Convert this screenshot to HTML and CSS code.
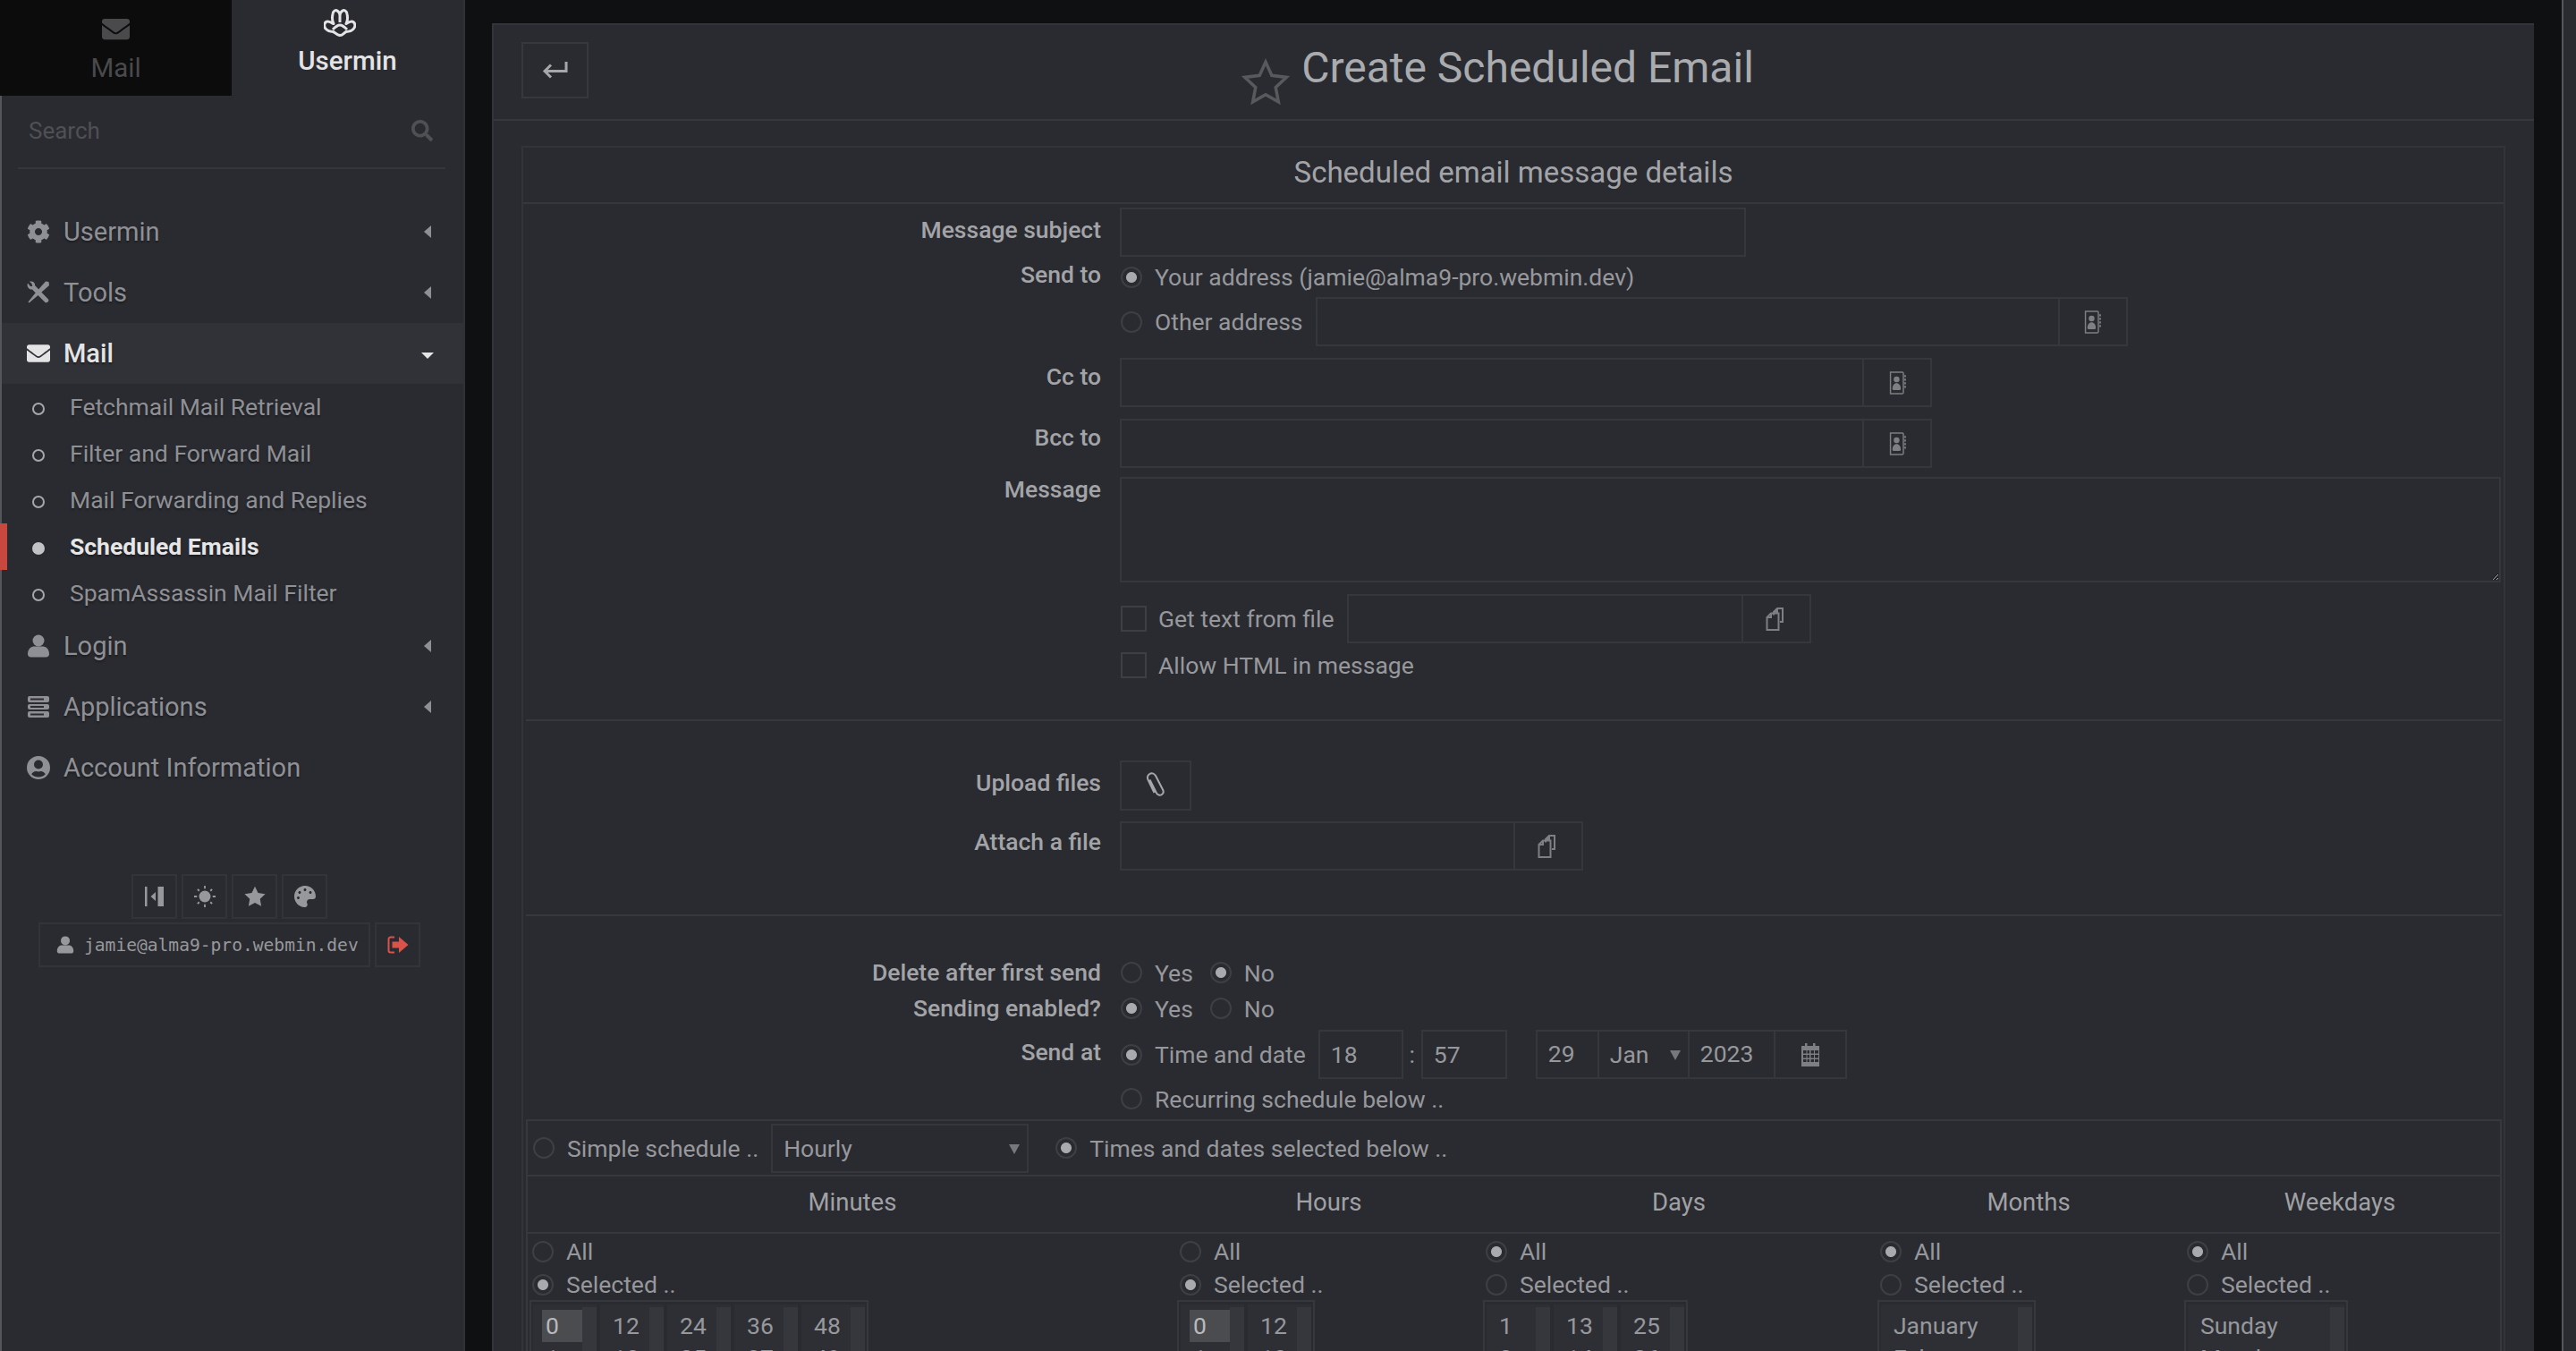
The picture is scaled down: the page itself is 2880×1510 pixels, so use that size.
FILE: index.html
```html
<!DOCTYPE html>
<html lang="en">
<head>
<meta charset="utf-8">
<title>Create Scheduled Email</title>
<link rel="stylesheet" href="styles.css">
</head>
<body>
<svg class="defs" xmlns="http://www.w3.org/2000/svg">
  <symbol id="i-envelope" viewBox="0 0 512 512"><path d="M502.3 190.8c3.9-3.1 9.7-.2 9.7 4.7V400c0 26.5-21.5 48-48 48H48c-26.5 0-48-21.5-48-48V195.6c0-5 5.7-7.8 9.7-4.7 22.4 17.4 52.1 39.5 154.1 113.6 21.1 15.4 56.7 47.8 92.2 47.6 35.7.3 72-32.8 92.3-47.6 102-74.1 131.6-96.3 154-113.7zM256 320c23.2.4 56.6-29.2 73.4-41.4 132.7-96.3 142.8-104.7 173.4-128.7 5.8-4.5 9.2-11.5 9.2-18.9v-19c0-26.5-21.5-48-48-48H48C21.5 64 0 85.5 0 112v19c0 7.4 3.4 14.3 9.2 18.9 30.6 23.9 40.7 32.4 173.4 128.7 16.8 12.2 50.2 41.8 73.4 41.4z"/></symbol>
  <symbol id="i-search" viewBox="0 0 512 512"><path d="M505 442.7L405.3 343c-4.5-4.5-10.6-7-17-7H372c27.6-35.3 44-79.7 44-128C416 93.1 322.9 0 208 0S0 93.1 0 208s93.1 208 208 208c48.3 0 92.7-16.4 128-44v16.3c0 6.4 2.5 12.5 7 17l99.7 99.7c9.4 9.4 24.6 9.4 33.9 0l28.3-28.3c9.4-9.4 9.4-24.6.1-34zM208 336c-70.7 0-128-57.2-128-128 0-70.7 57.2-128 128-128 70.7 0 128 57.2 128 128 0 70.7-57.2 128-128 128z"/></symbol>
  <symbol id="i-cog" viewBox="0 0 512 512"><path d="M487.4 315.7l-42.6-24.6c4.3-23.2 4.3-47 0-70.2l42.6-24.6c4.9-2.8 7.1-8.6 5.5-14-11.1-35.6-30-67.8-54.7-94.6-3.8-4.1-10-5.1-14.8-2.3L380.8 110c-17.9-15.4-38.5-27.3-60.8-35.1V25.8c0-5.6-3.9-10.5-9.4-11.7-36.7-8.2-74.3-7.8-109.2 0-5.5 1.2-9.4 6.1-9.4 11.7V75c-22.2 7.9-42.8 19.8-60.8 35.1L88.7 85.5c-4.9-2.8-11-1.9-14.8 2.3-24.7 26.7-43.6 58.9-54.7 94.6-1.7 5.4.6 11.2 5.5 14L67.3 221c-4.3 23.2-4.3 47 0 70.2l-42.6 24.6c-4.9 2.8-7.1 8.6-5.5 14 11.1 35.6 30 67.8 54.7 94.6 3.8 4.1 10 5.1 14.8 2.3l42.6-24.6c17.9 15.4 38.5 27.3 60.8 35.1v49.2c0 5.6 3.9 10.5 9.4 11.7 36.7 8.2 74.3 7.8 109.2 0 5.5-1.2 9.4-6.1 9.4-11.7v-49.2c22.2-7.9 42.8-19.8 60.8-35.1l42.6 24.6c4.9 2.8 11 1.9 14.8-2.3 24.7-26.7 43.6-58.9 54.7-94.6 1.5-5.5-.7-11.3-5.6-14.1zM256 336c-44.1 0-80-35.9-80-80s35.9-80 80-80 80 35.9 80 80-35.9 80-80 80z"/></symbol>
  <symbol id="i-tools" viewBox="0 0 26 26"><path d="M24.5 1 21 0.5 9.5 13.5 1.5 23.5 2.5 24.5 12 16.5 25 5Z"/><path d="M2 1.500 6 5.500 5.500 3 3 .8C6-.5 9.500 1.500 9 5L24 20.500C25.500 22 22.500 25.500 20.500 24L6 9.500C2.500 10 -.5 6 1 2.500L4 6 6.500 6" fill="currentColor" fill-rule="evenodd"/></symbol>
  <symbol id="i-user" viewBox="0 0 26 26"><circle cx="13" cy="7" r="6.500"/><path d="M1 22c0-6 4-8.500 7.500-8.500h9c3.500 0 7.500 2.500 7.500 8.500 0 2-1.500 3.500-3.500 3.500h-17C2.500 25.500 1 24 1 22Z"/></symbol>
  <symbol id="i-server" viewBox="0 0 26 26"><path fill-rule="evenodd" d="M3 1h20a2 2 0 0 1 2 2v3a2 2 0 0 1-2 2H3a2 2 0 0 1-2-2V3a2 2 0 0 1 2-2Zm0 9h20a2 2 0 0 1 2 2v2a2 2 0 0 1-2 2H3a2 2 0 0 1-2-2v-2a2 2 0 0 1 2-2Zm0 8h20a2 2 0 0 1 2 2v3a2 2 0 0 1-2 2H3a2 2 0 0 1-2-2v-3a2 2 0 0 1 2-2ZM4 3.500v2h15v-2Zm0 8.500v2h15v-2Zm0 8.500v2h15v-2Z"/></symbol>
  <symbol id="i-usercircle" viewBox="0 0 26 26"><path fill-rule="evenodd" d="M13 0a13 13 0 1 1 0 26a13 13 0 0 1 0-26Zm0 4.500a5 5 0 1 0 0 10a5 5 0 0 0 0-10Zm0 19c3 0 5.800-1.200 7.800-3.300c-1-1.900-3-3.200-5.300-3.200c-.8 0-1.600.5-2.500.5s-1.700-.5-2.500-.5c-2.300 0-4.300 1.300-5.300 3.200c2 2.100 4.800 3.300 7.800 3.300Z"/></symbol>
  <symbol id="i-star" viewBox="0 0 26 26"><path d="M13 .8l3.800 8 8.700 1.200-6.300 6 1.500 8.700-7.700-4.200-7.700 4.200 1.500-8.700-6.300-6 8.700-1.200Z"/></symbol>
  <symbol id="i-palette" viewBox="0 0 512 512"><path d="M204.300 5C104.900 24.400 24.800 104.300 5.200 203.400c-37 187 131.700 326.400 258.800 306.700 41.200-6.400 61.400-54.600 42.500-91.700-23.100-45.400 9.900-98.400 60.900-98.400h79.700c35.800 0 64.800-29.600 64.900-65.300C511.500 97.100 368.100-26.900 204.300 5zM96 320c-17.700 0-32-14.300-32-32s14.300-32 32-32 32 14.300 32 32-14.300 32-32 32zm32-128c-17.700 0-32-14.300-32-32s14.300-32 32-32 32 14.300 32 32-14.300 32-32 32zm128-64c-17.700 0-32-14.300-32-32s14.300-32 32-32 32 14.300 32 32-14.300 32-32 32zm128 64c-17.700 0-32-14.300-32-32s14.300-32 32-32 32 14.300 32 32-14.300 32-32 32z"/></symbol>
  <symbol id="i-book" viewBox="0 0 26 36"><path fill="none" stroke="currentColor" stroke-width="2" d="M2 1.500h18.500a1.500 1.500 0 0 1 1.500 1.500v30a1.500 1.500 0 0 1-1.500 1.500H2Z"/><circle cx="11.500" cy="12.500" r="4.500"/><path d="M5 27c0-5 3-8.500 6.500-8.500S18 22 18 27c0 1.500-1 2-2 2H7c-1 0-2-.5-2-2Z"/><path d="M23.500 6h2.500v3h-2.500Zm0 5.500h2.500v3h-2.500Zm0 5.500h2.500v3h-2.500Zm0 5.500h2.500v3h-2.500Z"/></symbol>
  <symbol id="i-copy" viewBox="0 0 24 26"><path fill="none" stroke="currentColor" stroke-width="2" d="M9 8.500V5L13 1h6v15h-3M1.500 11 6 6.500h8.500V25H1.500ZM13 1v4H9M6 6.500v4.500H1.500"/></symbol>
  <symbol id="i-clip" viewBox="0 0 24 30"><path fill="none" stroke="currentColor" stroke-width="2" d="M5.500 8.500 13 23.500c1 2 4 3 6 1.500 1.800-1.200 2-3.500 1-5.500L12 4C10.800 1.800 8 .5 5.500 1.800 3 3 2.300 6 3.500 8.500L10.500 23"/></symbol>
  <symbol id="i-cal" viewBox="0 0 22 26"><path fill-rule="evenodd" d="M5 0h2.500v3H14V0h2.500v3H21v23H1V3h4Zm-2 8v3.500h3.500V8Zm4.500 0v3.500H10V8Zm4 0v3.500h3.500V8Zm4.500 0v3.500H20V8ZM3 13v3.500h3.500V13Zm4.500 0v3.500H10V13Zm4 0v3.500h3.500V13Zm4.500 0v3.500H20V13ZM3 18v3h3.500v-3Zm4.500 0v3H10v-3Zm4 0v3h3.500v-3Zm4.500 0v3H20v-3Z"/></symbol>
</svg>

<aside class="sidebar">
  <div class="tabs">
    <div class="tab tab-off">
      <svg class="tab-icon"><use href="#i-envelope"/></svg>
      <span>Mail</span>
    </div>
    <div class="tab tab-on">
      <svg class="tab-logo" viewBox="0 0 36 34"><path d="M11 17.500C9 14 9.500 9 10 6.500 10.500 3 13.500 2 15 3c1.500 1 3 3 3 5 0-2 1.500-4 3-5 1.500-1 4.500 0 5 3.500.5 2.500 1 7.500-1 11 3-2 6-3.500 8-2 2.500 2 2.500 5.500 0 8-2 2.200-5 2.800-8 3-2.500 1-4 4.500-7.500 4s-4.500-3-7-4c-3-.2-6-.8-8-3-2.500-2.500-2.500-6 0-8 2-1.500 5-.0 8 2Zm7-9.500v8m-8 8c3-3 6-5 8-5s5 2 8 5"/></svg>
      <span>Usermin</span>
    </div>
  </div>
  <div class="search">
    <span>Search</span>
    <svg class="search-icon"><use href="#i-search"/></svg>
  </div>
  <nav class="nav">
    <div class="nav-item"><svg class="nav-icon"><use href="#i-cog"/></svg><span class="nav-label">Usermin</span><i class="arrow-left"></i></div>
    <div class="nav-item"><svg class="nav-icon"><use href="#i-tools"/></svg><span class="nav-label">Tools</span><i class="arrow-left"></i></div>
    <div class="nav-item nav-open"><svg class="nav-icon"><use href="#i-envelope"/></svg><span class="nav-label">Mail</span><i class="arrow-down"></i></div>
    <ul class="subnav">
      <li>Fetchmail Mail Retrieval</li>
      <li>Filter and Forward Mail</li>
      <li>Mail Forwarding and Replies</li>
      <li class="sub-active">Scheduled Emails</li>
      <li>SpamAssassin Mail Filter</li>
    </ul>
    <div class="nav-item"><svg class="nav-icon"><use href="#i-user"/></svg><span class="nav-label">Login</span><i class="arrow-left"></i></div>
    <div class="nav-item"><svg class="nav-icon"><use href="#i-server"/></svg><span class="nav-label">Applications</span><i class="arrow-left"></i></div>
    <div class="nav-item"><svg class="nav-icon"><use href="#i-usercircle"/></svg><span class="nav-label">Account Information</span></div>
  </nav>
  <div class="tools-row">
    <div class="tool-btn"><svg class="tool-icon" viewBox="0 0 24 24"><path d="M1 1h2.500v22H1ZM15.500 1H22v22h-6.500ZM13 7v10l-5.500-5Z"/></svg></div>
    <div class="tool-btn"><svg class="tool-icon" viewBox="0 0 26 26"><circle cx="13" cy="13" r="7"/><path d="M12 0h2v3.500h-2Zm0 22.500h2V26h-2ZM0 12h3.500v2H0Zm22.500 0H26v2h-3.500ZM3.500 5l1.500-1.500L7 5.500 5.500 7Zm15.500 15.500 1.500-1.500 2 2-1.500 1.500ZM3.500 21l2-2L7 20.500l-2 2Zm15.500-15.500 2-2L22.500 5l-2 2Z"/></svg></div>
    <div class="tool-btn"><svg class="tool-icon"><use href="#i-star"/></svg></div>
    <div class="tool-btn"><svg class="tool-icon"><use href="#i-palette"/></svg></div>
  </div>
  <div class="user-row">
    <div class="user-chip"><svg class="user-icon"><use href="#i-user"/></svg><span>jamie@alma9-pro.webmin.dev</span></div>
    <div class="logout"><svg class="logout-icon" viewBox="0 0 24 20"><path fill="none" stroke="currentColor" stroke-width="2" d="M8 1.500H3.500A2 2 0 0 0 1.500 3.500v13a2 2 0 0 0 2 2H8"/><path d="M5.500 6.500h7.500V1L23.500 10 13 19v-5.500H5.500Z"/></svg></div>
  </div>
</aside>

<main class="panel">
  <header class="page-head">
    <div class="head-left">
      <button class="back" type="button"><svg class="back-icon" viewBox="0 0 30 24"><path d="M27 2v10.500H3M10 5.500 3 12.500l7 7"/></svg></button>
      <svg class="head-star" viewBox="0 0 26 26"><path d="M13 2.500l3.300 7.300 7.900 1-5.800 5.400 1.500 7.800-6.900-3.900-6.900 3.900 1.500-7.800L1.800 10.800l7.900-1Z"/></svg>
    </div>
    <h1>Create Scheduled Email</h1>
    <div></div>
  </header>

  <section class="box">
    <h2 class="box-title">Scheduled email message details</h2>
    <div class="row row-subject">
      <label class="lbl">Message subject</label>
      <div class="fld"><input class="in w-subject" type="text"></div>
    </div>
    <div class="row">
      <label class="lbl lbl-send">Send to</label>
      <div class="fld">
        <div class="line line-45"><input class="radio" type="radio" name="to" checked><span>Your address (jamie@alma9-pro.webmin.dev)</span></div>
        <div class="line line-55"><input class="radio" type="radio" name="to"><span>Other address</span>
          <div class="group g-other"><input class="in" type="text"><span class="addon"><svg class="ic-book"><use href="#i-book"/></svg></span></div>
        </div>
      </div>
    </div>
    <div class="row row-cc">
      <label class="lbl lbl-cc">Cc to</label>
      <div class="fld"><div class="group g-cc"><input class="in" type="text"><span class="addon"><svg class="ic-book"><use href="#i-book"/></svg></span></div></div>
    </div>
    <div class="row row-cc">
      <label class="lbl lbl-cc">Bcc to</label>
      <div class="fld"><div class="group g-cc"><input class="in" type="text"><span class="addon"><svg class="ic-book"><use href="#i-book"/></svg></span></div></div>
    </div>
    <div class="row row-msg">
      <label class="lbl lbl-msg">Message</label>
      <div class="fld">
        <textarea class="msg"></textarea>
        <div class="line line-55 line-file"><input class="check" type="checkbox"><span>Get text from file</span>
          <div class="group g-file"><input class="in" type="text"><span class="addon"><svg class="ic-copy"><use href="#i-copy"/></svg></span></div>
        </div>
        <div class="line line-48"><input class="check" type="checkbox"><span>Allow HTML in message</span></div>
      </div>
    </div>
    <hr class="sep sep-1">
    <div class="row row-upload">
      <label class="lbl">Upload files</label>
      <div class="fld"><button class="clip-btn" type="button"><svg class="ic-clip"><use href="#i-clip"/></svg></button></div>
    </div>
    <div class="row row-attach">
      <label class="lbl lbl-attach">Attach a file</label>
      <div class="fld"><div class="group g-attach"><input class="in" type="text"><span class="addon"><svg class="ic-copy"><use href="#i-copy"/></svg></span></div></div>
    </div>
    <hr class="sep sep-2">
    <div class="row row-yn">
      <label class="lbl lbl-center">Delete after first send</label>
      <div class="fld line"><input class="radio" type="radio" name="del"><span class="yes">Yes</span><input class="radio" type="radio" name="del" checked><span>No</span></div>
    </div>
    <div class="row row-yn">
      <label class="lbl lbl-center">Sending enabled?</label>
      <div class="fld line"><input class="radio" type="radio" name="en" checked><span class="yes">Yes</span><input class="radio" type="radio" name="en"><span>No</span></div>
    </div>
    <div class="row row-at">
      <label class="lbl">Send at</label>
      <div class="fld">
        <div class="line line-55"><input class="radio" type="radio" name="at" checked><span>Time and date</span>
          <input class="in in-time" type="text" value="18"><span class="colon">:</span><input class="in in-time2" type="text" value="57">
          <div class="date">
            <span class="d-cell d-day">29</span>
            <span class="d-cell d-mon">Jan<i class="caret"></i></span>
            <span class="d-cell d-year">2023</span>
            <span class="d-cell d-cal"><svg class="ic-cal"><use href="#i-cal"/></svg></span>
          </div>
        </div>
        <div class="line line-44"><input class="radio" type="radio" name="at"><span>Recurring schedule below ..</span></div>
      </div>
    </div>

    <div class="sched">
      <div class="sched-top line">
        <input class="radio" type="radio" name="mode"><span>Simple schedule ..</span>
        <span class="select">Hourly<i class="caret"></i></span>
        <input class="radio radio-times" type="radio" name="mode" checked><span>Times and dates selected below ..</span>
      </div>
      <div class="sched-head">
        <span>Minutes</span><span>Hours</span><span>Days</span><span>Months</span><span>Weekdays</span>
      </div>
      <div class="sched-body">
        <div class="col">
          <div class="line line-37"><input class="radio" type="radio" name="c1"><span>All</span></div>
          <div class="line line-37"><input class="radio" type="radio" name="c1" checked><span>Selected ..</span></div>
          <div class="multi">
            <div class="list l-num"><div class="opts"><b class="opt opt-on">0</b><b class="opt">1</b></div><i class="sb"></i></div>
            <div class="list l-num"><div class="opts"><b class="opt">12</b><b class="opt">13</b></div><i class="sb"></i></div>
            <div class="list l-num"><div class="opts"><b class="opt">24</b><b class="opt">25</b></div><i class="sb"></i></div>
            <div class="list l-num"><div class="opts"><b class="opt">36</b><b class="opt">37</b></div><i class="sb"></i></div>
            <div class="list l-num"><div class="opts"><b class="opt">48</b><b class="opt">49</b></div><i class="sb"></i></div>
          </div>
        </div>
        <div class="col">
          <div class="line line-37"><input class="radio" type="radio" name="c2"><span>All</span></div>
          <div class="line line-37"><input class="radio" type="radio" name="c2" checked><span>Selected ..</span></div>
          <div class="multi">
            <div class="list l-num"><div class="opts"><b class="opt opt-on">0</b><b class="opt">1</b></div><i class="sb"></i></div>
            <div class="list l-num"><div class="opts"><b class="opt">12</b><b class="opt">13</b></div><i class="sb"></i></div>
          </div>
        </div>
        <div class="col">
          <div class="line line-37"><input class="radio" type="radio" name="c3" checked><span>All</span></div>
          <div class="line line-37"><input class="radio" type="radio" name="c3"><span>Selected ..</span></div>
          <div class="multi">
            <div class="list l-num"><div class="opts"><b class="opt">1</b><b class="opt">2</b></div><i class="sb"></i></div>
            <div class="list l-num"><div class="opts"><b class="opt">13</b><b class="opt">14</b></div><i class="sb"></i></div>
            <div class="list l-num"><div class="opts"><b class="opt">25</b><b class="opt">26</b></div><i class="sb"></i></div>
          </div>
        </div>
        <div class="col">
          <div class="line line-37"><input class="radio" type="radio" name="c4" checked><span>All</span></div>
          <div class="line line-37"><input class="radio" type="radio" name="c4"><span>Selected ..</span></div>
          <div class="multi">
            <div class="list l-mon"><div class="opts"><b class="opt">January</b><b class="opt">February</b></div><i class="sb"></i></div>
          </div>
        </div>
        <div class="col">
          <div class="line line-37"><input class="radio" type="radio" name="c5" checked><span>All</span></div>
          <div class="line line-37"><input class="radio" type="radio" name="c5"><span>Selected ..</span></div>
          <div class="multi">
            <div class="list l-day"><div class="opts"><b class="opt">Sunday</b><b class="opt">Monday</b></div><i class="sb"></i></div>
          </div>
        </div>
      </div>
    </div>
  </section>
</main>
<div class="edge"></div>
</body>
</html>
```

FILE: styles.css
```css
* { box-sizing: border-box; }
html, body { margin: 0; height: 1510px; overflow: hidden; }
body {
  display: flex;
  background: #0f1011;
  font-family: Roboto, "Liberation Sans", sans-serif;
  font-size: 26.500px;
  color: #97989c;
}
.defs { position: absolute; width: 0; height: 0; }
svg { fill: currentColor; display: block; }

/* sidebar */
.sidebar {
  width: 520px;
  flex: none;
  height: 1510px;
  background: #2a2b30;
  border-left: 2px solid #55565a;
  border-right: 2px solid #303136;
  display: flex;
  flex-direction: column;
}
.tabs { display: flex; height: 107px; margin-left: -2px; }
.tab { flex: 1; display: flex; flex-direction: column; align-items: center; font-size: 29.500px; line-height: 36px; }
.tab-off { flex: none; width: 259px; background: #0c0c0d; color: #4a4a4c; padding-top: 17px; }
.tab-on { color: #e4e4e5; font-weight: 500; padding-top: 9px; }
.tab-icon { width: 31px; height: 31px; margin-bottom: 10px; }
.tab-logo { width: 36px; height: 34px; margin-bottom: 7px; fill: none; stroke: currentColor; stroke-width: 3; stroke-linejoin: round; margin-left: -18px; }
.search {
  height: 82px;
  margin: 0 20px 0 18px;
  padding: 0 12px;
  border-bottom: 2px solid #35363b;
  display: flex;
  justify-content: space-between;
  align-items: center;
  color: #4f5054;
  font-size: 26px;
  padding-top: 25px;
  padding-bottom: 27px;
}
.search-icon { width: 24px; height: 24px; margin-right: 2px; }
.nav { margin-top: 36px; color: #8f9095; }
.nav-item { height: 68px; display: flex; align-items: center; padding-left: 28px; padding-right: 36px; font-size: 29px; text-shadow: 0 2px 2px #1d1e21; }
.nav-open { background: #313238; color: #e4e4e5; font-weight: 500; margin-top: 0; }
.nav-icon { width: 26px; height: 26px; flex: none; }
.nav-label { flex: 1; margin-left: 15px; }
.arrow-left { width: 0; height: 0; border-style: solid; border-width: 7px 8px 7px 0; border-color: transparent currentColor transparent transparent; margin-right: 0; }
.arrow-down { width: 0; height: 0; border-style: solid; border-width: 7px 7px 0; border-color: currentColor transparent transparent; margin-right: -3px; margin-top: 4px; }
.subnav { list-style: none; margin: 0; padding: 0; height: 259px; font-size: 26.500px; }
.subnav li { position: relative; height: 52px; line-height: 52px; padding-left: 76px; text-shadow: 0 2px 2px #1d1e21; }
.subnav li::before { content: ""; position: absolute; left: 34px; top: 21px; width: 10px; height: 10px; border: 2px solid #a6a7aa; border-radius: 50%; background: #2a2b30; }
.subnav .sub-active { color: #e6e6e7; font-weight: 700; }
.subnav .sub-active::before { background: #c2c3c5; border-color: #c2c3c5; }
.subnav .sub-active::after { content: ""; position: absolute; left: -2px; top: 0; width: 8px; height: 52px; background: #c8483f; }
.tools-row { display: flex; gap: 5px; margin-top: 85px; margin-left: 145px; }
.tool-btn { width: 51px; height: 50px; border: 2px solid #333439; display: flex; align-items: center; justify-content: center; color: #97989c; }
.tool-icon { width: 24px; height: 24px; }
.user-row { display: flex; gap: 5px; margin-top: 4px; margin-left: 41px; }
.user-chip { width: 371px; height: 50px; border: 2px solid #333439; display: flex; align-items: center; padding-left: 18px; gap: 11px; font-family: "DejaVu Sans Mono", monospace; font-size: 19.600px; color: #97989c; }
.user-icon { width: 20px; height: 24px; }
.logout { width: 51px; height: 50px; border: 2px solid #333439; display: flex; align-items: center; justify-content: center; color: #d9534a; }
.logout-icon { width: 24px; height: 20px; }

/* main */
.panel {
  width: 2283px;
  flex: none;
  margin: 26px 0 0 30px;
  background: #2a2b30;
  border-top: 2px solid #333439;
  border-left: 2px solid #333439;
  padding: 0 0 0;
}
.page-head {
  height: 107px;
  display: grid;
  grid-template-columns: 1fr auto 1fr;
  border-bottom: 2px solid #37383d;
  padding: 0 0 0 31px;
}
.head-left { display: flex; justify-content: space-between; padding-top: 19px; }
.back { width: 75px; height: 63px; background: none; border: 2px solid #37383d; padding: 0; color: #a6a7aa; display: flex; align-items: center; justify-content: center; }
.back-icon { width: 30px; height: 24px; fill: none; stroke: currentColor; stroke-width: 3; }
.head-star { width: 54px; height: 54px; margin-top: 17px; margin-right: 13px; fill: none; stroke: #58595d; stroke-width: 1.700; }
h1 { margin: 0; font-size: 48px; line-height: 96px; font-weight: 400; color: #a9abae; }
.box { margin: 28px 32px 0 31px; border: 2px solid #333439; border-bottom: 0; }
.box-title { margin: 0; height: 63px; line-height: 55px; text-align: center; font-size: 33px; font-weight: 400; color: #a3a4a8; border-bottom: 2px solid #37383d; }
.row { display: grid; grid-template-columns: 646px 1fr; column-gap: 21px; }
.lbl { text-align: right; font-weight: 500; line-height: 28px; padding-top: 11px; color: #a3a4a7; }
.lbl-send { padding-top: 6px; }
.lbl-cc { padding-top: 7px; }
.lbl-msg { padding-top: 0; }
.lbl-attach { padding-top: 9px; }
.lbl-center { padding-top: 0; line-height: 40px; }
.row-subject { margin-top: 4px; height: 55px; }
.row-cc { margin-top: 13px; height: 55px; }
.row-msg { margin-top: 10px; }
.row-upload { margin-top: 44px; height: 56px; }
.row-attach { margin-top: 12px; height: 55px; }
.row-yn { height: 40px; }
.row-at { margin-top: 4px; }
.sep { height: 2px; border: 0; background: #37383d; margin: 0 2px 0 3px; }
.sep-1 { margin-top: 37px; }
.sep-2 { margin-top: 49px; margin-bottom: 43px; }
.in { height: 55px; background: transparent; border: 2px solid #36373c; font: inherit; color: inherit; padding: 0 12px; display: block; min-width: 0; }
.w-subject { width: 700px; }
.line { display: flex; align-items: center; white-space: nowrap; }
.line-45 { height: 45px; }
.line-55 { height: 55px; }
.line-48 { height: 48px; }
.line-44 { height: 44px; }
.line-37 { height: 37px; }
.radio, .check { appearance: none; margin: 0; flex: none; background: transparent; }
.radio { width: 24px; height: 24px; border: 2px solid #3e3f44; border-radius: 50%; margin-right: 14px; margin-left: 1px; }
.radio:checked { background: radial-gradient(circle, #a9aaad 0 5.500px, transparent 6.500px); }
.check { width: 29px; height: 29px; border: 2px solid #3e3f44; margin-right: 13px; margin-left: 1px; }
.group { display: flex; height: 55px; }
.group .in { flex: 1; border-right: 0; }
.addon { width: 78px; border: 2px solid #36373c; display: flex; align-items: center; justify-content: center; color: #7e7f83; }
.g-other { width: 908px; margin-left: 14px; }
.g-cc { width: 908px; }
.g-file { width: 519px; margin-left: 14px; }
.g-attach { width: 518px; }
.ic-book { width: 25px; height: 26px; }
.ic-copy { width: 24px; height: 26px; }
.msg { display: block; width: 1544px; height: 118px; background: transparent; border: 2px solid #36373c; resize: both; color-scheme: dark; }
.line-file { margin-top: 13px; }
.clip-btn { width: 80px; height: 56px; background: transparent; border: 2px solid #36373c; padding: 0; color: #a6a7aa; display: flex; align-items: center; justify-content: center; }
.ic-clip { width: 24px; height: 30px; }
.yes { margin-right: 18px; }
.in-time { width: 95px; margin-left: 14px; }
.colon { width: 20px; text-align: center; }
.in-time2 { width: 96px; }
.date { display: flex; height: 55px; margin-left: 32px; border: 2px solid #36373c; }
.d-cell { display: flex; align-items: center; height: 51px; border-right: 2px solid #36373c; padding-left: 12px; position: relative; }
.d-day { width: 69px; padding-bottom: 3px; }
.d-mon { width: 101px; }
.d-year { width: 96px; padding-bottom: 3px; }
.d-cal { width: 78px; border-right: 0; justify-content: center; padding: 0; color: #7e7f83; }
.ic-cal { width: 22px; height: 26px; }
.caret { position: absolute; right: 8px; top: 21px; width: 0; height: 0; border-style: solid; border-width: 11px 6px 0; border-color: #77787c transparent transparent; }
.sched { margin: 0 2px 0 3px; border: 2px solid #37383d; border-bottom: 0; margin-top: 1px; }
.sched-top { height: 62px; padding-left: 5px; border-bottom: 2px solid #37383d; }
.select { position: relative; width: 288px; height: 55px; border: 2px solid #36373c; margin-left: 14px; margin-right: 29px; padding-left: 12px; display: flex; align-items: center; }
.sched-head { height: 64px; display: grid; grid-template-columns: 726px 339px 444px 338px 1fr; text-align: center; line-height: 58px; font-size: 27.500px; border-bottom: 2px solid #37383d; color: #a0a1a5; }
.sched-body { display: grid; grid-template-columns: 724px 342px 441px 343px 1fr; padding-left: 1px; padding-top: 1px; }
.col .line { padding-left: 3px; }
.multi { display: inline-flex; gap: 4px; border: 2px solid #37383d; border-bottom: 0; padding: 3px 2px 0; height: 200px; margin-left: 1px; vertical-align: top; margin-top: -1px; }
.list { display: flex; background: #2e2f34; padding: 3px 0 0 10px; }
.opts { flex: 1; padding-top: 3px; display: flex; flex-direction: column; }
.opt { display: block; font-weight: 400; height: 36px; line-height: 36px; padding-left: 4px; white-space: nowrap; }
.opt-on { background: #4b4c50; color: #b9babc; }
.sb { width: 16px; background: #36373c; flex: none; }
.l-num { width: 71px; }
.l-mon { width: 169px; }
.l-day { width: 175px; }

.edge { width: 16px; height: 1510px; flex: none; margin-left: 31px; background: #2a2b30; border-left: 2px solid #55565a; border-bottom-left-radius: 0; }
```
